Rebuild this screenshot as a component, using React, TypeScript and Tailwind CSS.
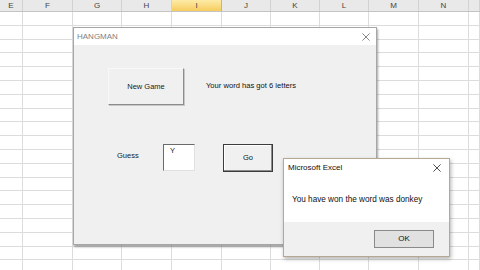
const COLS: [string, number][] = [
  ['E', 23],
  ['F', 50],
  ['G', 49],
  ['H', 50],
  ['I', 50],
  ['J', 49],
  ['K', 49],
  ['L', 49],
  ['M', 50],
  ['N', 50],
  ['O', 11],
]

const ROWS = Array.from({ length: 19 }, (_, i) => i)

const CloseX = ({ size, color }: { size: number; color: string }) => (
  <svg width={size} height={size} viewBox="0 0 10 10">
    <path d="M0.5 0.5 L9.5 9.5 M9.5 0.5 L0.5 9.5" stroke={color} strokeWidth="1" fill="none" />
  </svg>
)

const Sheet = () => (
  <div className="flex flex-col">
    <div className="flex h-[12px] border-b border-[#c4c4c4] bg-[#e9e9e9]">
      {COLS.map(([name, w]) => (
        <div
          key={name}
          style={{ width: w }}
          className={
            name === 'I'
              ? 'flex shrink-0 items-center justify-center border-r border-[#d8b650] bg-gradient-to-b from-[#fdeba6] to-[#f6cd5c] text-[8px] leading-none text-[#444]'
              : 'flex shrink-0 items-center justify-center border-r border-[#d2d2d2] text-[8px] leading-none text-[#444]'
          }
        >
          {name === 'O' ? '' : name}
        </div>
      ))}
    </div>
    {ROWS.map((r) => (
      <div key={r} className="flex h-[13.8px] shrink-0 border-b border-[#dcdcdc] bg-white">
        {COLS.map(([name, w]) => (
          <div key={name} style={{ width: w }} className="shrink-0 border-r border-[#dcdcdc]" />
        ))}
      </div>
    ))}
  </div>
)

const Hangman = () => (
  <div className="absolute left-[73px] top-[27px] flex h-[218px] w-[304px] flex-col border border-[#a6a6a6] bg-[#f0f0f0] shadow-[1px_2px_2px_rgba(0,0,0,0.35)]">
    <div className="flex h-[17px] shrink-0 items-center justify-between bg-white pl-[3px] pr-[6px]">
      <span className="text-[8px] text-[#808080]">HANGMAN</span>
      <CloseX size={8} color="#6a6a6a" />
    </div>
    <div className="flex items-center pl-[34px] pt-[23px]">
      <button
        type="button"
        className="h-[37px] w-[76px] border border-t-[#f8f8f8] border-l-[#f8f8f8] border-r-[#8c8c8c] border-b-[#8c8c8c] bg-[#f0f0f0] text-[7.5px] text-[#222] shadow-[1px_1px_0_#c8c8c8]"
      >
        New Game
      </button>
      <span className="ml-[22px] -mt-[2px] text-[7.6px] text-[#111]">Your word has got 6 letters</span>
    </div>
    <div className="flex items-start pl-[43px] pt-[39px]">
      <span className="mt-[6px] w-[46px] text-[7.5px] text-[#222]">Guess</span>
      <div className="h-[27px] w-[32px] border border-t-[#6a6a6a] border-l-[#6a6a6a] border-r-[#e0e0e0] border-b-[#e0e0e0] bg-white pl-[6px] pt-[1px] text-[7.5px] leading-[10px] text-[#222]">
        Y
      </div>
      <button
        type="button"
        className="ml-[28px] h-[28px] w-[50px] border border-[#3c3c3c] bg-[#f0f0f0] text-[7.5px] text-[#111] shadow-[inset_-1px_-1px_0_#8c8c8c,inset_1px_1px_0_#ffffff]"
      >
        Go
      </button>
    </div>
  </div>
)

const MsgBox = () => (
  <div className="absolute left-[283px] top-[158px] flex h-[99px] w-[167px] flex-col border border-[#b7a896] bg-white shadow-[1px_2px_4px_rgba(0,0,0,0.3)]">
    <div className="flex h-[18px] shrink-0 items-center justify-between pl-[4px] pr-[8px]">
      <span className="text-[8px] text-[#111]">Microsoft Excel</span>
      <CloseX size={8} color="#222" />
    </div>
    <div className="flex flex-1 items-center pl-[8px] pt-[2px]">
      <span className="text-[8.2px] text-[#111]">You have won the word was donkey</span>
    </div>
    <div className="flex h-[34px] shrink-0 items-start justify-end bg-[#f0f0f0] pr-[15px] pt-[8px]">
      <button
        type="button"
        className="h-[18px] w-[60px] border border-[#8a8a8a] bg-[#e1e1e1] text-[8px] text-[#111]"
      >
        OK
      </button>
    </div>
  </div>
)

export default function App() {
  return (
    <div className="relative h-[270px] w-[480px] overflow-hidden bg-white font-['Liberation_Sans',Arial,sans-serif]">
      <Sheet />
      <Hangman />
      <MsgBox />
    </div>
  )
}
